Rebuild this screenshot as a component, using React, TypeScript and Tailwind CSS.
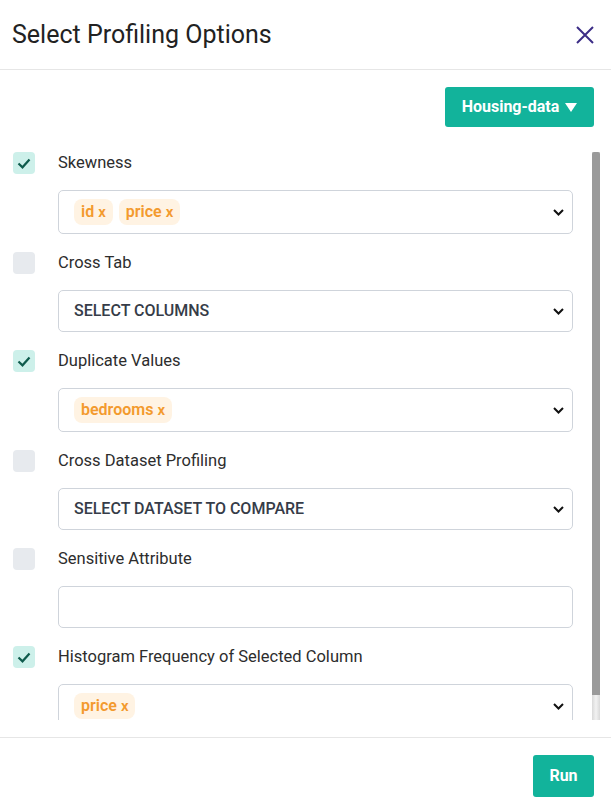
import { useState } from "react";

type Row = {
  label: string;
  checked: boolean;
  kind: "chips" | "placeholder" | "input";
  chips?: string[];
  placeholder?: string;
};

const rows: Row[] = [
  { label: "Skewness", checked: true, kind: "chips", chips: ["id", "price"] },
  { label: "Cross Tab", checked: false, kind: "placeholder", placeholder: "SELECT COLUMNS" },
  { label: "Duplicate Values", checked: true, kind: "chips", chips: ["bedrooms"] },
  {
    label: "Cross Dataset Profiling",
    checked: false,
    kind: "placeholder",
    placeholder: "SELECT DATASET TO COMPARE",
  },
  { label: "Sensitive Attribute", checked: false, kind: "input" },
  { label: "Histogram Frequency of Selected Column", checked: true, kind: "chips", chips: ["price"] },
];

const Chevron = () => (
  <svg width="11" height="7" viewBox="0 0 11 7" className="shrink-0">
    <path d="M1 1l4.5 4.5L10 1" fill="none" stroke="#111" strokeWidth="2" />
  </svg>
);

const CheckBox = ({ checked, onClick }: { checked: boolean; onClick: () => void }) => (
  <button
    type="button"
    onClick={onClick}
    className={
      "flex h-[22px] w-[22px] shrink-0 items-center justify-center rounded-[4px] " +
      (checked ? "bg-[#cdf0ea]" : "bg-[#e7eaee]")
    }
  >
    {checked && (
      <svg width="14" height="11" viewBox="0 0 14 11">
        <path d="M1.5 5.5l4 3.8L12.5 1.5" fill="none" stroke="#0e5b4c" strokeWidth="2.2" />
      </svg>
    )}
  </button>
);

const OptionRow = ({ row }: { row: Row }) => {
  const [checked, setChecked] = useState(row.checked);

  return (
    <div className="mb-[18px]">
      <div className="flex h-[22px] items-center">
        <div className="w-[58px] shrink-0 pl-[13px]">
          <CheckBox checked={checked} onClick={() => setChecked(!checked)} />
        </div>
        <span className="text-[16.5px] text-[#2d2d2d]">{row.label}</span>
      </div>
      <div className="mt-[16px] pl-[58px]">
        {row.kind === "input" ? (
          <input
            type="text"
            className="block h-[42px] w-full rounded-[5px] border border-[#cfd4db] bg-white px-4 outline-none"
          />
        ) : (
          <div
            className={
              "flex w-full items-center justify-between rounded-[5px] border border-[#cfd4db] bg-white pl-[15px] pr-[8px] " +
              (row.kind === "chips" ? "h-[44px]" : "h-[42px]")
            }
          >
            {row.kind === "chips" ? (
              <div className="flex gap-[6px]">
                {row.chips?.map((c) => (
                  <span
                    key={c}
                    className="flex h-[26px] items-center rounded-[8px] bg-[#fff3e3] px-[7px] text-[16px] font-semibold text-[#f39a2e]"
                  >
                    {c}
                    <span className="ml-[4px] text-[15px]">x</span>
                  </span>
                ))}
              </div>
            ) : (
              <span className="text-[16px] font-medium text-[#363c48]">{row.placeholder}</span>
            )}
            <Chevron />
          </div>
        )}
      </div>
    </div>
  );
};

const App = () => {
  return (
    <div className="h-[806px] w-[611px] bg-white font-['Roboto',sans-serif]">
      <div className="flex h-[70px] items-center justify-between border-b border-[#e6e6e6] pl-[12px] pr-[14px]">
        <h2 className="text-[25px] font-normal text-[#222]">Select Profiling Options</h2>
        <button type="button" className="p-[2px]">
          <svg width="20" height="20" viewBox="0 0 20 20">
            <path d="M2 2l16 16M18 2L2 18" stroke="#3c2d86" strokeWidth="2" />
          </svg>
        </button>
      </div>

      <div className="flex justify-end pr-[17px] pt-[17px]">
        <button
          type="button"
          className="flex h-[40px] w-[149px] items-center justify-center gap-[6px] rounded-[3px] bg-[#12b39b] text-[16px] font-bold text-white"
        >
          Housing-data
          <svg width="12" height="9" viewBox="0 0 12 9">
            <path d="M0 0h12L6 9z" fill="white" />
          </svg>
        </button>
      </div>

      <div className="mr-[11px] mt-[25px] flex h-[568px]">
        <div className="min-w-0 flex-1 overflow-y-auto pr-[19px] [scrollbar-width:none]">
          {rows.map((r) => (
            <OptionRow key={r.label} row={r} />
          ))}
        </div>
        <div className="flex w-[8px] shrink-0 flex-col bg-gradient-to-r from-[#d9d9d9] via-[#f2f2f2] to-[#d9d9d9]">
          <div className="h-[543px] rounded-t-[2px] bg-[#9a9a9a]" />
        </div>
      </div>

      <div className="mt-[17px] flex justify-end border-t border-[#e6e6e6] pr-[17px] pt-[17px]">
        <button
          type="button"
          className="h-[42px] w-[61px] rounded-[3px] bg-[#12b39b] text-[16px] font-bold text-white"
        >
          Run
        </button>
      </div>
    </div>
  );
};

export default App;
